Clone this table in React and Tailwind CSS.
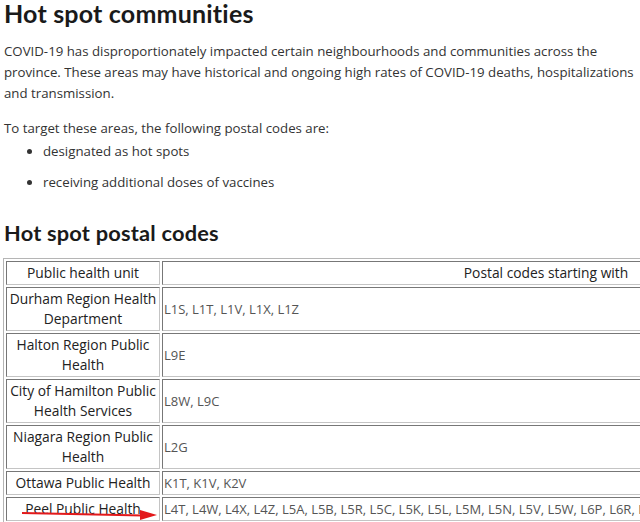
import React from "react";

const rows = [
  ["Durham Region Health Department", "L1S, L1T, L1V, L1X, L1Z"],
  ["Halton Region Public Health", "L9E"],
  ["City of Hamilton Public Health Services", "L8W, L9C"],
  ["Niagara Region Public Health", "L2G"],
  ["Ottawa Public Health", "K1T, K1V, K2V"],
  ["Peel Public Health", "L4T, L4W, L4X, L4Z, L5A, L5B, L5R, L5C, L5K, L5L, L5M, L5N, L5V, L5W, L6P, L6R, L6S, L6T, L6V, L6W, L6X"],
];

const cell = "border border-t-[#777] border-l-[#777] border-r-[#c4c4c4] border-b-[#c4c4c4] p-px";

export default function App() {
  return (
    <div
      className="relative w-[640px] h-[522px] overflow-hidden bg-white text-[#333]"
      style={{ fontFamily: "'Open Sans', 'Liberation Sans', sans-serif" }}
    >
      <div className="px-[4px]">
        <h1
          className="text-[25px] font-bold leading-[26px] text-[#1a1a1a] tracking-[0.2px]"
          style={{ fontFamily: "Lato, 'Open Sans', sans-serif" }}
        >
          Hot spot communities
        </h1>
        <p className="mt-[15px] text-[13.25px] leading-[21px] whitespace-nowrap">
          COVID-19 has disproportionately impacted certain neighbourhoods and communities across the
          <br />
          province. These areas may have historical and ongoing high rates of COVID-19 deaths, hospitalizations
          <br />
          and transmission.
        </p>
        <p className="mt-[14px] text-[13.25px] leading-[21px]">
          To target these areas, the following postal codes are:
        </p>
        <ul className="list-disc pl-[39px] mt-[2px] text-[13.25px] leading-[21px]">
          <li>designated as hot spots</li>
          <li className="mt-[10px]">receiving additional doses of vaccines</li>
        </ul>
        <h2
          className="mt-[28px] text-[21.8px] font-bold leading-[24px] text-[#1a1a1a] tracking-[0.2px]"
          style={{ fontFamily: "Lato, 'Open Sans', sans-serif" }}
        >
          Hot spot postal codes
        </h2>
      </div>
      <table className="ml-[3px] mt-[13px] border-separate border-spacing-[2px] border border-t-[#b5b5b5] border-l-[#b5b5b5] border-r-[#888] border-b-[#888] text-[13.8px] leading-[20px] w-[930px] table-fixed">
        <colgroup>
          <col className="w-[154px]" />
          <col />
        </colgroup>
        <tbody>
          <tr>
            <td className={`${cell} text-center text-[#222]`}>Public health unit</td>
            <td className={`${cell} text-center text-[#222]`}>Postal codes starting with</td>
          </tr>
          {rows.map(([unit, codes]) => (
            <tr key={unit}>
              <td className={`${cell} text-center text-[#222]`}>{unit}</td>
              <td className={`${cell} text-left text-[13px] text-[#555] whitespace-nowrap overflow-hidden`}>
                {codes}
              </td>
            </tr>
          ))}
        </tbody>
      </table>
      <svg className="absolute left-0 top-[500px]" width="170" height="22" viewBox="0 0 170 22">
        <line x1="22" y1="13" x2="143" y2="15.5" stroke="#e3191b" strokeWidth="2" />
        <polygon points="140,10 157,15 140,20" fill="#e3191b" />
      </svg>
    </div>
  );
}
